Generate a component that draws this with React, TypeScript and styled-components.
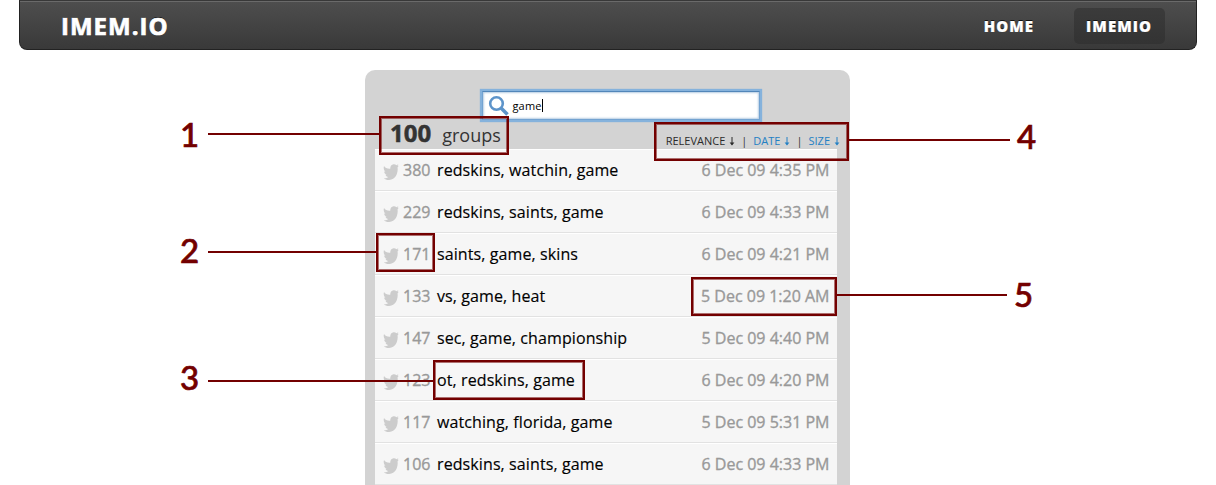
import React from "react";
import styled, { createGlobalStyle } from "styled-components";

const GlobalStyle = createGlobalStyle`
  * { box-sizing: border-box; }
  html, body { margin: 0; background: #fff; overflow: hidden; }
  body { font-family: "Open Sans", "Noto Sans", sans-serif; color: #000; }
`;

const Page = styled.div`
  position: relative;
  width: 1216px;
  height: 485px;
  overflow: hidden;
`;

const NavBar = styled.nav`
  display: flex;
  align-items: center;
  justify-content: space-between;
  height: 50px;
  margin: 0 19px;
  padding: 2px 31px 0 41px;
  border-radius: 0 0 8px 8px;
  border: 1px solid #222;
  border-top-color: #383838;
  background: linear-gradient(#4e4e4e, #393939);
  box-shadow: inset 0 1px 0 #6a6a6a;
  color: #fff;
  text-shadow: 0 -1px 0 #111;
`;

const Brand = styled.a`
  margin-top: -2px;
  font-size: 24px;
  font-weight: 700;
  letter-spacing: 1px;
  -webkit-text-stroke: 0.7px #fff;
`;

const NavLinks = styled.div`
  display: flex;
  gap: 27px;
`;

const NavLink = styled.a<{ $active?: boolean }>`
  padding: 0 13px 0 12px;
  height: 36px;
  line-height: 36px;
  border-radius: 5px;
  font-size: 15px;
  font-weight: 800;
  letter-spacing: 1.05px;
  -webkit-text-stroke: 0.2px #fff;
  background: ${(p) => (p.$active ? "linear-gradient(#3b3b3b, #333)" : "none")};
`;

const Panel = styled.main`
  display: flex;
  flex-direction: column;
  width: 485px;
  height: 440px;
  margin: 20px 0 0 365px;
  padding: 20px 13px 0 10px;
  border-radius: 10px 10px 0 0;
  background: #d3d3d3;
`;

const SearchBox = styled.label`
  display: flex;
  align-items: center;
  align-self: center;
  width: 278px;
  height: 29px;
  margin: 1px 0 0 29px;
  padding-left: 5px;
  gap: 4px;
  flex: none;
  background: #fff;
  border: 1px solid #73a3d1;
  border-top-color: #5286b9;
  box-shadow: 0 0 1px 2px #85b2dc, inset 0 0 2px 1px #b6cde3;
  font-size: 11px;
`;

const Query = styled.span`
  display: flex;
  align-items: center;
  letter-spacing: 0.15px;
`;

const Caret = styled.i`
  width: 1px;
  height: 13px;
  background: #000;
`;

const ListHeader = styled.header`
  display: flex;
  justify-content: space-between;
  height: 29px;
  flex: none;
  padding-left: 15px;
  color: #333;
`;

const GroupCount = styled.div`
  display: flex;
  align-items: baseline;
  gap: 11px;
  height: 28px;
  line-height: 26px;
  font-size: 18px;
`;

const Total = styled.strong`
  font-size: 24px;
  font-weight: 700;
  -webkit-text-stroke: 0.5px #333;
`;

const SortBar = styled.div`
  display: flex;
  align-items: center;
  gap: 6px;
  height: 20px;
  margin: 10px -3px 0 0;
  font-size: 11px;
`;

const SortLink = styled.a<{ $current?: boolean }>`
  display: flex;
  align-items: center;
  gap: 4px;
  color: ${(p) => (p.$current ? "#2b2b2b" : "#2480c4")};
`;

const List = styled.ul`
  list-style: none;
  margin: 0;
  padding: 0;
`;

const Row = styled.li`
  display: flex;
  align-items: center;
  height: 42px;
  padding: 0 7.5px 0 8px;
  border-top: 1px solid #fff;
  border-bottom: 1px solid #e2e2e2;
  background: #f6f6f6;
  font-size: 16px;
  letter-spacing: 0.1px;
`;

const Muted = styled.span`
  color: #999;
  letter-spacing: 0;
  -webkit-text-stroke: 0.35px #999;
`;

const Count = styled(Muted)`
  width: 34px;
  margin-left: 4px;
`;

const Words = styled.span`
  flex: 1;
  -webkit-text-stroke: 0.15px #000;
`;

const BirdIcon = styled.svg`
  margin-top: 3px;
`;

const ArrowIcon = styled.svg`
  margin-top: 2px;
`;

const Frame = styled.div<{ $x: number; $y: number; $w: number; $h: number }>`
  position: absolute;
  left: ${(p) => p.$x}px;
  top: ${(p) => p.$y}px;
  width: ${(p) => p.$w}px;
  height: ${(p) => p.$h}px;
  border: 2px solid #730000;
  box-shadow: inset 0 0 0 1px rgba(115, 0, 0, 0.55);
`;

const Leader = styled.div<{ $x: number; $y: number; $w: number }>`
  position: absolute;
  left: ${(p) => p.$x}px;
  top: ${(p) => p.$y}px;
  width: ${(p) => p.$w}px;
  height: 2px;
  background: #730000;
`;

const Numeral = styled.div<{ $x: number; $y: number }>`
  position: absolute;
  left: ${(p) => p.$x}px;
  top: ${(p) => p.$y}px;
  line-height: 40px;
  font-family: Lato, sans-serif;
  font-size: 33px;
  font-weight: 500;
  color: #730000;
  -webkit-text-stroke: 0.7px #730000;
`;

const Bird = () => (
  <BirdIcon width="16" height="18" viewBox="0 0 16 18">
    <path
      fill="#ccc"
      d="M1 3.1C2.3 5 4.3 5.9 7.2 5.7C7.2 3.2 8.5 1.5 10.6 1.3C11.8 1.2 12.7 1.5 13.4 2.2L15.3 1.3L14.6 2.9L15.8 2.8L14.6 4.3C15.3 10.6 12.3 16.8 6.2 17C3.9 17.1 2.2 16.4 0.8 15.2C2.8 15.3 4.2 14.9 5.3 13.9C3.8 13.8 2.8 13 2.5 11.8L3.8 11.7C2.2 11.2 1.2 10 1.1 8.5L2.4 8.8C0.8 7.3 0.3 5.1 1 3.1Z"
    />
  </BirdIcon>
);

const Magnifier = () => (
  <svg width="21" height="21" viewBox="0 0 21 21" fill="none" stroke="#5d94ca">
    <circle cx="8.5" cy="8.5" r="6.3" strokeWidth="2.6" />
    <path d="M13 13 19.5 19.5" strokeWidth="3.6" />
  </svg>
);

const DownArrow = () => (
  <ArrowIcon width="6" height="10" viewBox="0 0 6 10" fill="none" stroke="currentColor">
    <path d="M3 1V8.5" strokeWidth="1" />
    <path d="M0.6 6.4H5.4L3 9.4Z" fill="currentColor" stroke="none" />
  </ArrowIcon>
);

const rows: [string, string, string][] = [
  ["380", "redskins, watchin, game", "6 Dec 09 4:35 PM"],
  ["229", "redskins, saints, game", "6 Dec 09 4:33 PM"],
  ["171", "saints, game, skins", "6 Dec 09 4:21 PM"],
  ["133", "vs, game, heat", "5 Dec 09 1:20 AM"],
  ["147", "sec, game, championship", "5 Dec 09 4:40 PM"],
  ["123", "ot, redskins, game", "6 Dec 09 4:20 PM"],
  ["117", "watching, florida, game", "5 Dec 09 5:31 PM"],
  ["106", "redskins, saints, game", "6 Dec 09 4:33 PM"],
];

const callouts = [
  { n: 1, frame: [379, 116, 130, 39], line: [208, 133, 171], label: [180, 114] },
  { n: 2, frame: [376, 233, 59, 39], line: [208, 251, 170], label: [180, 230] },
  { n: 3, frame: [433, 360, 152, 40], line: [208, 380, 225], label: [180, 357] },
  { n: 4, frame: [654, 122, 195, 39], line: [849, 139, 161], label: [1017, 116] },
  { n: 5, frame: [691, 277, 146, 39], line: [837, 294, 170], label: [1014, 274] },
];

export default function App() {
  return (
    <Page>
      <GlobalStyle />
      <NavBar>
        <Brand>IMEM.IO</Brand>
        <NavLinks>
          <NavLink>HOME</NavLink>
          <NavLink $active>IMEMIO</NavLink>
        </NavLinks>
      </NavBar>
      <Panel>
        <SearchBox>
          <Magnifier />
          <Query>
            game
            <Caret />
          </Query>
        </SearchBox>
        <ListHeader>
          <GroupCount>
            <Total>100</Total>
            <span>groups</span>
          </GroupCount>
          <SortBar>
            <SortLink $current>
              RELEVANCE <DownArrow />
            </SortLink>
            <span>|</span>
            <SortLink>
              DATE <DownArrow />
            </SortLink>
            <span>|</span>
            <SortLink>
              SIZE <DownArrow />
            </SortLink>
          </SortBar>
        </ListHeader>
        <List>
          {rows.map(([count, words, date]) => (
            <Row key={count}>
              <Bird />
              <Count>{count}</Count>
              <Words>{words}</Words>
              <Muted>{date}</Muted>
            </Row>
          ))}
        </List>
      </Panel>
      {callouts.map(({ n, frame, line, label }) => (
        <React.Fragment key={n}>
          <Leader $x={line[0]} $y={line[1]} $w={line[2]} />
          <Frame $x={frame[0]} $y={frame[1]} $w={frame[2]} $h={frame[3]} />
          <Numeral $x={label[0]} $y={label[1]}>
            {n}
          </Numeral>
        </React.Fragment>
      ))}
    </Page>
  );
}
